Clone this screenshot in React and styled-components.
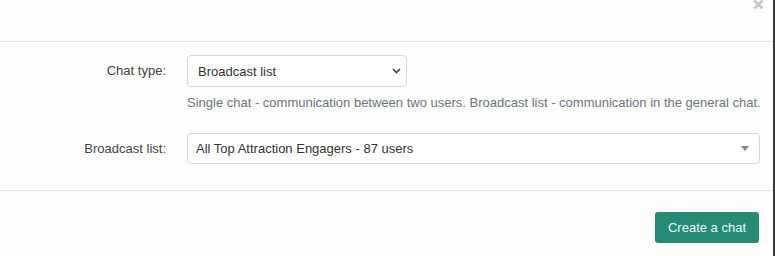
import React, { useState } from "react";
import styled, { createGlobalStyle } from "styled-components";

const GlobalStyle = createGlobalStyle`
  html, body {
    margin: 0;
    padding: 0;
    background: #fdfdfd;
  }
  body {
    font-family: "Liberation Sans", Arial, sans-serif;
    color: #333;
  }
`;

const CreateChatModal = () => {
  const [chatType, setChatType] = useState("broadcast");

  return (
    <S.Modal>
      <S.Header>
        <S.Close aria-label="Close">
          <svg width="11" height="10" viewBox="0 0 11 10">
            <path d="M1.5 0.5 L9.5 8.5 M9.5 0.5 L1.5 8.5" stroke="#c6c6c6" strokeWidth="2.6" />
          </svg>
        </S.Close>
      </S.Header>
      <S.Body>
        <S.Row>
          <S.Label>Chat type:</S.Label>
          <S.Field>
            <S.SelectWrap>
              <S.Select value={chatType} onChange={(e) => setChatType(e.target.value)}>
                <option value="single">Single chat</option>
                <option value="broadcast">Broadcast list</option>
              </S.Select>
              <S.Chevron width="9" height="6" viewBox="0 0 9 6">
                <path d="M1 1 L4.5 4.5 L8 1" fill="none" stroke="#444" strokeWidth="1.7" />
              </S.Chevron>
            </S.SelectWrap>
            <S.Help>
              Single chat - communication between two users. Broadcast list - communication in the general chat.
            </S.Help>
          </S.Field>
        </S.Row>
        <S.Row>
          <S.Label>Broadcast list:</S.Label>
          <S.Combo>
            <S.ComboText>All Top Attraction Engagers - 87 users</S.ComboText>
            <S.Arrow />
          </S.Combo>
        </S.Row>
      </S.Body>
      <S.Footer>
        <S.PrimaryButton>Create a chat</S.PrimaryButton>
      </S.Footer>
    </S.Modal>
  );
};

const S = {
  Modal: styled.div`
    width: 773px;
    height: 256px;
    border-right: 2px solid #3a3a3a;
    background: #fdfdfd;
    display: flex;
    flex-direction: column;
    overflow: hidden;
  `,
  Header: styled.div`
    position: relative;
    flex-shrink: 0;
    height: 41px;
    border-bottom: 1px solid #e6e6e6;
  `,
  Close: styled.button`
    position: absolute;
    top: 0;
    right: 9px;
    padding: 0;
    border: none;
    background: none;
    line-height: 0;
    cursor: pointer;
  `,
  Body: styled.div`
    flex-shrink: 0;
    padding: 13px 13px 26px 0;
    display: flex;
    flex-direction: column;
    gap: 22px;
    border-bottom: 1px solid #e6e6e6;
  `,
  Row: styled.div`
    display: grid;
    grid-template-columns: 166px 1fr;
    column-gap: 21px;
    align-items: start;
  `,
  Label: styled.label`
    text-align: right;
    font-size: 13px;
    color: #444;
    line-height: 31px;
  `,
  Field: styled.div`
    display: flex;
    flex-direction: column;
    gap: 7px;
  `,
  SelectWrap: styled.div`
    position: relative;
    width: 220px;
  `,
  Select: styled.select`
    appearance: none;
    width: 100%;
    height: 32px;
    padding: 0 24px 0 10px;
    border: 1px solid #d4d8dd;
    border-radius: 4px;
    background: #fff;
    font-family: "Liberation Sans", Arial, sans-serif;
    font-size: 13px;
    color: #333;
    outline: none;
  `,
  Chevron: styled.svg`
    position: absolute;
    top: 13px;
    right: 6px;
    pointer-events: none;
  `,
  Help: styled.div`
    font-size: 13px;
    color: #6c757d;
    line-height: 17px;
    white-space: nowrap;
  `,
  Combo: styled.div`
    display: flex;
    align-items: center;
    justify-content: space-between;
    height: 29px;
    padding: 0 10px 0 8px;
    border: 1px solid #d4d8dd;
    border-radius: 4px;
    background: #fff;
    cursor: pointer;
  `,
  ComboText: styled.span`
    font-size: 13px;
    color: #333;
  `,
  Arrow: styled.span`
    width: 0;
    height: 0;
    border-left: 4px solid transparent;
    border-right: 4px solid transparent;
    border-top: 5px solid #888;
  `,
  Footer: styled.div`
    display: flex;
    justify-content: flex-end;
    padding: 21px 14px 0 0;
  `,
  PrimaryButton: styled.button`
    height: 31px;
    padding: 0 13px;
    border: none;
    border-radius: 3px;
    background: #268b74;
    color: #eef7f4;
    font-family: "Liberation Sans", Arial, sans-serif;
    font-size: 13px;
    cursor: pointer;
  `,
};

const App = () => (
  <>
    <GlobalStyle />
    <CreateChatModal />
  </>
);

export default App;
